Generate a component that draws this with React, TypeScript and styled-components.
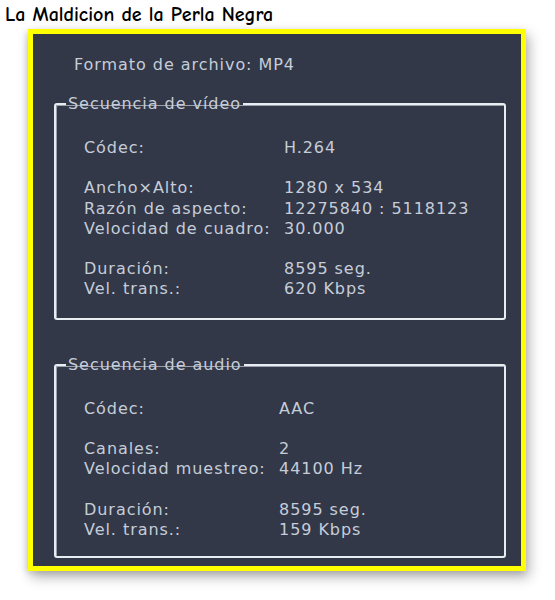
import React from "react";
import styled, { createGlobalStyle } from "styled-components";

const Global = createGlobalStyle`
  html, body { margin: 0; padding: 0; background: #ffffff; }
  body { width: 555px; height: 600px; overflow: hidden; }
`;

const Page = styled.div`
  display: flex;
  flex-direction: column;
  width: 555px;
  height: 600px;
`;

const Title = styled.h1`
  margin: 0;
  padding: 3px 0 0 5px;
  height: 26px;
  font-family: "Comic Sans MS", "Comic Neue", "Open Sans", sans-serif;
  font-weight: 700;
  font-size: 20px;
  line-height: 24px;
  color: #000;
`;

const Frame = styled.div`
  box-sizing: border-box;
  margin-left: 28px;
  width: 498px;
  height: 542px;
  border: 5px solid #ffff00;
  box-shadow: 3px 6px 12px rgba(0, 0, 0, 0.3), -2px 2px 6px rgba(0, 0, 0, 0.12);
  background: #323848;
`;

const Panel = styled.div`
  display: flex;
  flex-direction: column;
  padding: 21px 15px 0 21px;
  font-family: "DejaVu Sans", Verdana, sans-serif;
  font-size: 16px;
  letter-spacing: 0.95px;
  line-height: 20px;
  color: #c6cdd9;
`;

const Format = styled.div`
  margin-left: 20px;
`;

const Group = styled.fieldset<{ $top: number; $bottom: number }>`
  margin: ${(p) => p.$top}px 0 0 0;
  padding: 0;
  min-width: 0;
  border: 2px solid #e9ecf1;
  border-radius: 3px;
  box-shadow: inset 1px 1px 0 #9aa1ad;
  padding-bottom: ${(p) => p.$bottom}px;
`;

const Legend = styled.legend`
  margin-left: 10px;
  padding: 0 2px;
  line-height: 20px;
`;

const Body = styled.div`
  display: flex;
  flex-direction: column;
  gap: 20px;
  padding: 24px 0 0 28px;
`;

const Block = styled.div<{ $label: number }>`
  display: grid;
  grid-template-columns: ${(p) => p.$label}px auto;
  grid-auto-rows: 20.3px;
`;

const Cell = styled.span`
  white-space: nowrap;
`;

type Row = [string, string];

const video: Row[][] = [
  [["Códec:", "H.264"]],
  [
    ["Ancho×Alto:", "1280 x 534"],
    ["Razón de aspecto:", "12275840 : 5118123"],
    ["Velocidad de cuadro:", "30.000"],
  ],
  [
    ["Duración:", "8595 seg."],
    ["Vel. trans.:", "620 Kbps"],
  ],
];

const audio: Row[][] = [
  [["Códec:", "AAC"]],
  [
    ["Canales:", "2"],
    ["Velocidad muestreo:", "44100 Hz"],
  ],
  [
    ["Duración:", "8595 seg."],
    ["Vel. trans.:", "159 Kbps"],
  ],
];

function Section(props: { title: string; groups: Row[][]; label: number; top: number; bottom: number }) {
  return (
    <Group $top={props.top} $bottom={props.bottom}>
      <Legend>{props.title}</Legend>
      <Body>
        {props.groups.map((g, i) => (
          <Block key={i} $label={props.label}>
            {g.map(([k, v]) => (
              <React.Fragment key={k}>
                <Cell>{k}</Cell>
                <Cell>{v}</Cell>
              </React.Fragment>
            ))}
          </Block>
        ))}
      </Body>
    </Group>
  );
}

export default function App() {
  return (
    <Page>
      <Global />
      <Title>La Maldicion de la Perla Negra</Title>
      <Frame>
        <Panel>
          <Format>Formato de archivo: MP4</Format>
          <Section title="Secuencia de vídeo" groups={video} label={200} top={19} bottom={18} />
          <Section title="Secuencia de audio" groups={audio} label={195} top={35} bottom={16} />
        </Panel>
      </Frame>
    </Page>
  );
}
